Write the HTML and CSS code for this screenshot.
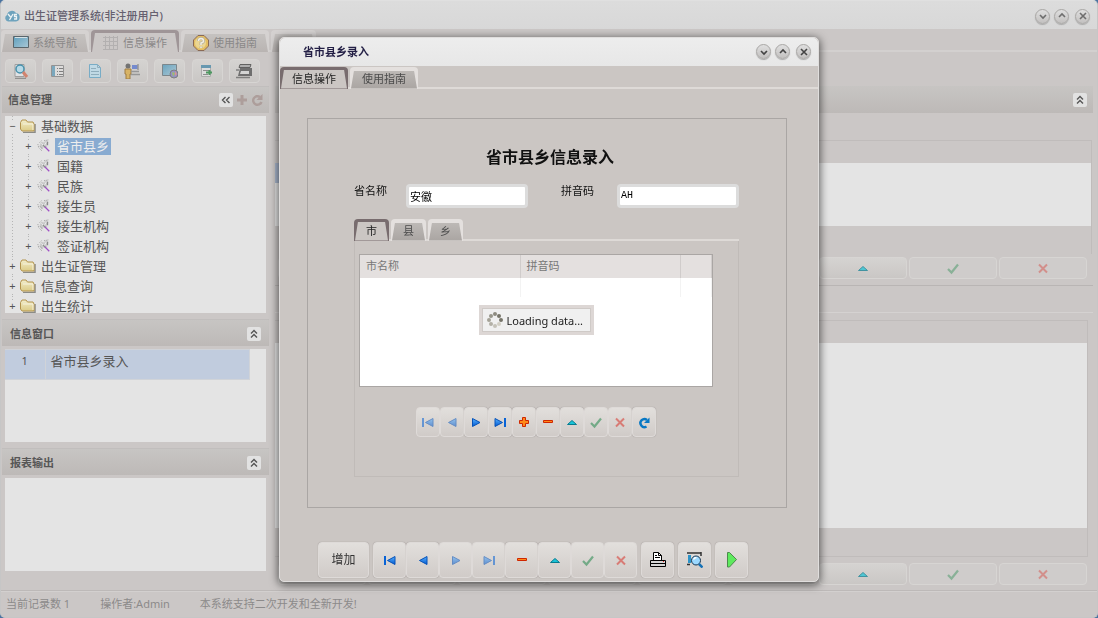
FILE: index.html
```html
<!DOCTYPE html>
<html lang="zh-CN">
<head>
  <meta charset="UTF-8">
  <title>出生证管理系统</title>
  <link rel="stylesheet" href="styles.css">
</head>
<body>
<svg class="defs" aria-hidden="true">
  <defs>
    <linearGradient id="blue" x1="0" y1="0" x2="0" y2="1"><stop offset="0" stop-color="#59b2ff"/><stop offset="1" stop-color="#0058d0"/></linearGradient>
    <linearGradient id="folderFill" x1="0" y1="0" x2="0" y2="1"><stop offset="0" stop-color="#f1eccb"/><stop offset="1" stop-color="#dccb86"/></linearGradient>
    <linearGradient id="screenFill" x1="0" y1="0" x2="1" y2="1"><stop offset="0" stop-color="#5f9fbd"/><stop offset="1" stop-color="#a9c8d6"/></linearGradient>
  </defs>
  <symbol id="first" viewBox="0 0 16 16"><path d="M3 4v9" stroke="#0863d6" stroke-width="2"/><path d="M13 4.500v8L5.500 8.500z" fill="url(#blue)" stroke="#0652b8"/></symbol>
  <symbol id="prev" viewBox="0 0 16 16"><path d="M12 4.500v8L4.500 8.500z" fill="url(#blue)" stroke="#0652b8"/></symbol>
  <symbol id="next" viewBox="0 0 16 16"><path d="M4.500 4.500v8L12 8.500z" fill="url(#blue)" stroke="#0652b8"/></symbol>
  <symbol id="last" viewBox="0 0 16 16"><path d="M13 4v9" stroke="#0863d6" stroke-width="2"/><path d="M3 4.500v8l7.500-4z" fill="url(#blue)" stroke="#0652b8"/></symbol>
  <symbol id="plus" viewBox="0 0 16 16"><path d="M6.500 3.500h3v3h3v3h-3v3h-3v-3h-3v-3h3z" fill="#ff8a18" stroke="#cf2600"/></symbol>
  <symbol id="minus" viewBox="0 0 16 16"><path d="M3.500 6.500h9v2h-9z" fill="#ff8a18" stroke="#cf2600"/></symbol>
  <symbol id="up" viewBox="0 0 16 16"><path d="M3.500 10.500h9L8 6.500z" fill="#18c4d8" stroke="#087c90"/></symbol>
  <symbol id="check" viewBox="0 0 16 16"><path d="M3 9l3.500 3.500L13 4.500" fill="none" stroke="#23894c" stroke-width="2.200"/></symbol>
  <symbol id="cross" viewBox="0 0 16 16"><path d="M4 4.500l8 8M12 4.500l-8 8" fill="none" stroke="#d8352c" stroke-width="2"/></symbol>
  <symbol id="reload" viewBox="0 0 16 16"><path d="M10.500 12.500A4 4 0 1 1 11 6" fill="none" stroke="#0878c4" stroke-width="2.400"/><path d="M13.500 3.500v5.500H8z" fill="#0878c4"/></symbol>
  <symbol id="collapse" viewBox="0 0 12 12"><path d="M3 5.500l3-3 3 3M3 9.500l3-3 3 3" fill="none" stroke="#555" stroke-width="1.400"/></symbol>
  <symbol id="chevDown" viewBox="0 0 16 16"><path d="M5 7l3 3 3-3" fill="none" stroke="#444" stroke-width="1.600"/></symbol>
  <symbol id="chevUp" viewBox="0 0 16 16"><path d="M5 9l3-3 3 3" fill="none" stroke="#444" stroke-width="1.600"/></symbol>
  <symbol id="close" viewBox="0 0 16 16"><path d="M5 5l6 6M11 5l-6 6" fill="none" stroke="#444" stroke-width="1.600"/></symbol>
  <symbol id="folder" viewBox="0 0 16 14"><path d="M3 13.500h12V5" fill="none" stroke="#8b8b86" stroke-width="1.500"/><path d="M.5 3.500L2 1h4l1.500 2H13l1 2v7H2L.5 10z" fill="url(#folderFill)" stroke="#b3944e"/><path d="M3 5h10v6" fill="none" stroke="#f6f2dc"/></symbol>
  <symbol id="gear" viewBox="0 0 16 16"><path d="M3 7l2-4 3 1 3-3 2 3-2 3 1 3-4-1-3 3z" fill="#c9c9c9"/><path d="M1 6l1 4 4 4M3 4l2-2M3 8l4 4M8 2l5-1" fill="none" stroke="#8f8f8f" stroke-dasharray="1 1"/><path d="M5 5l3 3 3-5" fill="none" stroke="#eee"/><path d="M7 7l3 3M12 3v4" stroke="#8a8a8a" stroke-width="1.500"/><path d="M9 9l5 5" stroke="#a04fc6" stroke-width="1.500"/></symbol>
</svg>

<div class="app">
  <header class="titlebar">
    <svg class="logo" viewBox="0 0 16 14"><path d="M4 12.500a3.500 3.500 0 0 1-1-6.500 5 5 0 0 1 9-2 4.300 4.300 0 0 1 0 8.500z" fill="#6ea3bd"/><path d="M4 5l2.500 3M9 5l-3.500 6M13 5.500h-2.500v2h2v2.500H10" fill="none" stroke="#eef3f5" stroke-width="1.300"/></svg>
    <h1>出生证管理系统(非注册用户)</h1>
    <div class="win-buttons">
      <button aria-label="最小化"><svg><use href="#chevDown"/></svg></button>
      <button aria-label="最大化"><svg><use href="#chevUp"/></svg></button>
      <button aria-label="关闭"><svg><use href="#close"/></svg></button>
    </div>
  </header>

  <nav class="tabs main-tabs">
    <button class="tab"><svg viewBox="0 0 16 16"><path d="M.5 1.500h15v11H.5z" fill="url(#screenFill)" stroke="#59656b"/><path d="M2 2.500h12" stroke="#d5e0e4"/></svg>系统导航</button>
    <button class="tab active"><svg viewBox="0 0 16 16"><path d="M0 2.500h15M0 6.500h15M0 10.500h15M0 14.500h15M2.500 1v14M6.500 1v14M10.500 1v14M14.500 1v14" stroke="#b3b0b0"/></svg>信息操作</button>
    <button class="tab"><svg viewBox="0 0 16 16"><path d="M5 .5h6L15.500 5v6L11 15.500H5L.5 11V5z" fill="#e2bd62" stroke="#8a6a56"/><circle cx="7.500" cy="8" r="5.500" fill="#ebd692"/><path d="M5.500 6q0-2.500 2.500-2.500T10.500 6Q10.500 7.500 8 8v2M8 11.500v1.500" fill="none" stroke="#b5b0a0" stroke-width="3"/><path d="M5.500 6q0-2.500 2.500-2.500T10.500 6Q10.500 7.500 8 8v2M8 11.500v1.500" fill="none" stroke="#f3efe0" stroke-width="1.500"/></svg>使用指南</button>
    <button class="tab spare" aria-label="更多"></button>
  </nav>

  <main class="workspace">
    <aside class="side">
      <div class="toolbar">
        <button aria-label="查询"><svg viewBox="0 0 16 16"><path d="M2 1.500h9v12H2z" fill="#e2e5e8" stroke="#9a9a9a"/><circle cx="7" cy="6" r="4" fill="#b5dbea" stroke="#398aa8" stroke-width="1.500"/><path d="M10 9l4 5" stroke="#d27c65" stroke-width="3"/><path d="M2 15.500h11" stroke="#8a8a8a" stroke-width="1.500"/></svg></button>
        <button aria-label="列表"><svg viewBox="0 0 16 16"><path d="M1.500 2.500h12v11h-12z" fill="#dfdedd" stroke="#8d8d8d"/><path d="M2 3h3v10H2z" fill="#72a4bc"/><path d="M7 5.500h1M9 5.500h4M7 8.500h1M9 8.500h4M7 11.500h1M9 11.500h4" stroke="#777"/></svg></button>
        <button aria-label="文档"><svg viewBox="0 0 16 16"><path d="M2.500 1.500h8l3 3v10h-11z" fill="#bfdbe8" stroke="#6fa9c6"/><path d="M10.500 1.500v3h3M4 5.500h5M4 8.500h8M4 11.500h8" fill="none" stroke="#89aabb"/></svg></button>
        <button aria-label="用户"><svg viewBox="0 0 16 16"><circle cx="4" cy="3" r="2.500" fill="#696969"/><path d="M1 6h6v5H6v5H2v-5H1z" fill="#d9b15b" stroke="#9a7436"/><path d="M8 2h6v4H8z" fill="#6b83cf"/><path d="M14 1v6M7 8.500h8M7 11.500h9" stroke="#929292" stroke-width="1.500"/></svg></button>
        <button aria-label="网络"><svg viewBox="0 0 16 16"><path d="M.5 1.500h14v11H.5z" fill="url(#screenFill)" stroke="#737f85"/><circle cx="12" cy="11" r="4" fill="#8d8bc6" stroke="#777"/><path d="M10 9l3 1-2 4z" fill="#99bd69"/><path d="M13 8l2 3-2 2z" fill="#d98c8c"/></svg></button>
        <button aria-label="新增"><svg viewBox="0 0 16 16"><path d="M2.500 2.500h9v11h-9z" fill="#dedede" stroke="#aaa"/><path d="M2 2h10v3H2z" fill="#5c93ad"/><path d="M4 7.500h7M4 11.500h5" stroke="#888"/><path d="M7 9.500h6M10.500 7v5" fill="none" stroke="#3e9254" stroke-width="2"/></svg></button>
        <button aria-label="打印"><svg viewBox="0 0 16 16"><path d="M4 1.500h11l-1 3H3z" fill="#aaa" stroke="#555"/><path d="M4 5h12v8H2z" fill="#656565"/><path d="M5 8h8v3H4z" fill="#d5d5d5"/><path d="M0 7h3M0 14.500h14" stroke="#777" stroke-width="1.500"/></svg></button>
      </div>

      <section class="panel grow">
        <header class="panel-head">
          <h2>信息管理</h2>
          <button class="fold" aria-label="折叠"><svg class="turn" viewBox="0 0 12 12"><use href="#collapse"/></svg></button>
          <button class="flat" aria-label="添加"><svg viewBox="0 0 12 12"><path d="M6 1v10M1 6h10" stroke="#ad9e9b" stroke-width="3"/></svg></button>
          <button class="flat" aria-label="刷新"><svg viewBox="0 0 12 12"><path d="M9 3A4.300 4.300 0 1 0 10.500 8" fill="none" stroke="#ad9e9b" stroke-width="2.400"/><path d="M11.500 0v6h-6z" fill="#ad9e9b"/></svg></button>
        </header>
        <div class="panel-body tree">
          <ul>
            <li class="open"><div class="row"><i>−</i><svg class="folder"><use href="#folder"/></svg><span>基础数据</span></div>
              <ul>
                <li><div class="row"><i>+</i><svg><use href="#gear"/></svg><span class="selected">省市县乡</span></div></li>
                <li><div class="row"><i>+</i><svg><use href="#gear"/></svg><span>国籍</span></div></li>
                <li><div class="row"><i>+</i><svg><use href="#gear"/></svg><span>民族</span></div></li>
                <li><div class="row"><i>+</i><svg><use href="#gear"/></svg><span>接生员</span></div></li>
                <li><div class="row"><i>+</i><svg><use href="#gear"/></svg><span>接生机构</span></div></li>
                <li><div class="row"><i>+</i><svg><use href="#gear"/></svg><span>签证机构</span></div></li>
              </ul>
            </li>
            <li><div class="row"><i>+</i><svg class="folder"><use href="#folder"/></svg><span>出生证管理</span></div></li>
            <li><div class="row"><i>+</i><svg class="folder"><use href="#folder"/></svg><span>信息查询</span></div></li>
            <li><div class="row"><i>+</i><svg class="folder"><use href="#folder"/></svg><span>出生统计</span></div></li>
          </ul>
        </div>
      </section>

      <section class="panel">
        <header class="panel-head">
          <h2>信息窗口</h2>
          <button class="fold" aria-label="折叠"><svg><use href="#collapse"/></svg></button>
        </header>
        <div class="panel-body">
          <table class="win-list">
            <tr><td>1</td><td>省市县乡录入</td></tr>
          </table>
        </div>
      </section>

      <section class="panel">
        <header class="panel-head">
          <h2>报表输出</h2>
          <button class="fold" aria-label="折叠"><svg><use href="#collapse"/></svg></button>
        </header>
        <div class="panel-body"></div>
      </section>
    </aside>

    <section class="content">
      <header class="panel-head">
        <button class="fold" aria-label="折叠"><svg><use href="#collapse"/></svg></button>
      </header>
      <div class="data-grid upper"><div class="grid-rows"><div class="current"></div></div></div>
      <div class="nav-bar">
        <button aria-label="首条"></button><button aria-label="上一条"></button><button aria-label="下一条"></button><button aria-label="末条"></button><button aria-label="插入"></button><button aria-label="删除"></button>
        <button aria-label="编辑"><svg><use href="#up"/></svg></button>
        <button class="off" aria-label="提交"><svg><use href="#check"/></svg></button>
        <button class="off" aria-label="取消"><svg><use href="#cross"/></svg></button>
      </div>
      <div class="divider"></div>
      <div class="data-grid lower"><div class="grid-rows"></div></div>
      <div class="nav-bar">
        <button aria-label="首条"></button><button aria-label="上一条"></button><button aria-label="下一条"></button><button aria-label="末条"></button><button aria-label="插入"></button><button aria-label="删除"></button>
        <button aria-label="编辑"><svg><use href="#up"/></svg></button>
        <button class="off" aria-label="提交"><svg><use href="#check"/></svg></button>
        <button class="off" aria-label="取消"><svg><use href="#cross"/></svg></button>
      </div>
    </section>
  </main>

  <footer class="status">
    <span>当前记录数 1</span>
    <span>操作者:Admin</span>
    <span>本系统支持二次开发和全新开发!</span>
  </footer>
</div>

<div class="overlay">
  <div class="dialog" role="dialog" aria-labelledby="dialogTitle">
    <header class="titlebar">
      <h1 id="dialogTitle">省市县乡录入</h1>
      <div class="win-buttons">
        <button aria-label="最小化"><svg><use href="#chevDown"/></svg></button>
        <button aria-label="最大化"><svg><use href="#chevUp"/></svg></button>
        <button aria-label="关闭"><svg><use href="#close"/></svg></button>
      </div>
    </header>
    <nav class="tabs">
      <button class="tab active">信息操作</button>
      <button class="tab">使用指南</button>
    </nav>

    <form class="form">
      <h2>省市县乡信息录入</h2>
      <div class="fields">
        <label for="province">省名称</label>
        <input id="province" type="text" value="安徽">
        <label for="pinyin">拼音码</label>
        <input id="pinyin" class="code" type="text" value="AH">
      </div>

      <nav class="tabs small-tabs">
        <button type="button" class="tab active">市</button>
        <button type="button" class="tab">县</button>
        <button type="button" class="tab">乡</button>
      </nav>
      <div class="tab-page">
        <div class="city-grid">
          <table>
            <thead><tr><th>市名称</th><th>拼音码</th><th></th></tr></thead>
            <tbody><tr><td></td><td></td><td></td></tr></tbody>
          </table>
          <div class="loading">
            <svg viewBox="0 0 16 16"><circle cx="8" cy="2" r="2" fill="#8d8b80"/><circle cx="12" cy="4" r="2" fill="#77756a"/><circle cx="14" cy="8" r="2" fill="#77756a"/><circle cx="12" cy="12" r="2" fill="#d2cfc5"/><circle cx="8" cy="14" r="2" fill="#c5c2b9"/><circle cx="4" cy="12" r="2" fill="#b3b0a6"/><circle cx="2" cy="8" r="2" fill="#a4a297"/><circle cx="4" cy="4" r="2" fill="#98968b"/></svg>
            <span>Loading data...</span>
          </div>
        </div>
        <div class="records">
          <button type="button" class="off" aria-label="首条"><svg><use href="#first"/></svg></button>
          <button type="button" class="off" aria-label="上一条"><svg><use href="#prev"/></svg></button>
          <button type="button" aria-label="下一条"><svg><use href="#next"/></svg></button>
          <button type="button" aria-label="末条"><svg><use href="#last"/></svg></button>
          <button type="button" aria-label="插入"><svg><use href="#plus"/></svg></button>
          <button type="button" aria-label="删除"><svg><use href="#minus"/></svg></button>
          <button type="button" aria-label="编辑"><svg><use href="#up"/></svg></button>
          <button type="button" class="off" aria-label="提交"><svg><use href="#check"/></svg></button>
          <button type="button" class="off" aria-label="取消"><svg><use href="#cross"/></svg></button>
          <button type="button" aria-label="刷新"><svg><use href="#reload"/></svg></button>
        </div>
      </div>
    </form>

    <div class="actions">
      <button class="add">增加</button>
      <div class="group">
        <button aria-label="首条"><svg><use href="#first"/></svg></button>
        <button aria-label="上一条"><svg><use href="#prev"/></svg></button>
        <button class="off" aria-label="下一条"><svg><use href="#next"/></svg></button>
        <button class="off" aria-label="末条"><svg><use href="#last"/></svg></button>
        <button aria-label="删除"><svg><use href="#minus"/></svg></button>
        <button aria-label="编辑"><svg><use href="#up"/></svg></button>
        <button class="off" aria-label="提交"><svg><use href="#check"/></svg></button>
        <button class="off" aria-label="取消"><svg><use href="#cross"/></svg></button>
      </div>
      <button aria-label="打印"><svg viewBox="0 0 16 16"><path d="M3.500 8V.5h5l3 3V8" fill="#fff" stroke="#000"/><path d="M8.500.5v3h3M5 3.500h2M5 5.500h5" fill="none" stroke="#000"/><path d="M.5 8.500h15v6H.5z" fill="#d6d6d6" stroke="#000"/><path d="M1 11.500h14" stroke="#000"/><path d="M13 9.500h1" stroke="#e02020"/></svg></button>
      <button aria-label="预览"><svg viewBox="0 0 16 16"><path d="M0 1h14M14 0v4M0 12.500h3" stroke="#333" stroke-width="1.500"/><path d="M1 3h3v8H1z" fill="#2c93c8"/><path d="M5 3h8v9H5z" fill="#ddd"/><circle cx="9" cy="8.500" r="4.500" fill="#9cd9ff" stroke="#17344e"/><path d="M6.500 7.500q1-2 3-2" fill="none" stroke="#fff" stroke-width="1.500"/><path d="M12 12l3.500 3.500" stroke="#1671b6" stroke-width="2.500"/></svg></button>
      <button aria-label="运行"><svg viewBox="0 0 16 16"><path d="M3.500.5h2l7 7-7 7.500h-2z" fill="#5eea5e" stroke="#4c8a4c"/></svg></button>
    </div>
  </div>
</div>
</body>
</html>
```
FILE: styles.css
```css
* {
  box-sizing: border-box;
}

body {
  margin: 0;
  background: #4a73a0;
  font-family: "Noto Sans", "Noto Sans CJK SC", sans-serif;
  font-size: 11px;
  line-height: 16px;
}

h1, h2 {
  margin: 0;
  font-size: 11px;
}

button {
  display: flex;
  align-items: center;
  justify-content: center;
  padding: 0;
  border: none;
  font: inherit;
  color: inherit;
}

svg {
  display: block;
  width: 16px;
  height: 16px;
  flex: none;
}

.defs {
  position: absolute;
  width: 0;
  height: 0;
}

.app {
  display: flex;
  flex-direction: column;
  min-height: 100vh;
  border: 1px solid #c6c6c6;
  border-top-color: #e0e0e0;
  border-radius: 5px;
  background: #cbc7c6;
  overflow: hidden;
}

/* title bars */
.titlebar {
  display: flex;
  align-items: center;
  height: 28px;
  padding: 2px 7px 0 3px;
  background: linear-gradient(#dcdcdc, #d8d8d8);
  color: #65606f;
}

.titlebar h1 {
  flex: 1;
  margin-left: 4px;
  font-weight: 500;
}

.logo {
  height: 14px;
}

.win-buttons {
  display: flex;
  gap: 4px;
}

.win-buttons button {
  width: 15px;
  height: 15px;
  border: 1px solid #a9a7a5;
  border-radius: 50%;
  background: linear-gradient(#dfdfdf, #c3c1c0);
  box-shadow: 0 1px 1px #aaa;
}

.win-buttons button:last-child {
  margin-left: 2px;
}

.app .win-buttons svg {
  opacity: 0.7;
}

/* tabs */
.tabs {
  display: flex;
  gap: 2px;
  height: 23px;
  padding: 1px 0 0;
  border-bottom: 2px solid #dedad7;
}

.tab {
  position: relative;
  width: 68px;
  height: 22px;
  padding-top: 3px;
  z-index: 0;
  border-radius: 4px 4px 0 0;
  background: #e4e0de;
  color: #4b4b4b;
}

.tab::before {
  content: "";
  position: absolute;
  z-index: -1;
  inset: 4px 0 0;
  background: linear-gradient(#bdb9b6, #aaa5a2);
  clip-path: polygon(4px 0, calc(100% - 4px) 0, calc(100% - 1px) 100%, 1px 100%);
}

.tab.active {
  background: #786c6e;
  color: #222;
}

.tab.active::before {
  inset: 3px 0 0;
  background: #cbc6c3;
}

.main-tabs {
  border-bottom-color: #d3d0cf;
}

.main-tabs .tab {
  gap: 4px;
  width: 88px;
  background: #d5d2d1;
  color: #8a8888;
}

.main-tabs .tab::before {
  background: linear-gradient(#c5c2c0, #b9b4b2);
}

.main-tabs .tab.active {
  background: #9f9597;
}

.main-tabs .tab.active::before {
  background: #cbc7c6;
}

.main-tabs .spare {
  width: 45px;
}

/* main area */
.workspace {
  flex: 1;
  display: grid;
  grid-template-columns: 267px 1fr;
  gap: 6px;
  padding: 0 4px 0 1px;
  border-bottom: 1px solid #bdb9b8;
}

.side, .content {
  display: flex;
  flex-direction: column;
  min-width: 0;
}

.side {
  padding-bottom: 19px;
}

.toolbar {
  display: flex;
  justify-content: space-between;
  height: 34px;
  padding: 7px 9px 3px 3px;
}

.toolbar button,
.nav-bar button {
  border: 1px solid #d7d5d3;
  border-radius: 4px;
  background: linear-gradient(#d5d3d1, #cac7c5);
}

.toolbar button {
  width: 31px;
}

.toolbar svg {
  opacity: 0.9;
}

.panel {
  display: flex;
  flex-direction: column;
  margin-bottom: 6px;
}

.panel:last-child {
  margin-bottom: 0;
}

.grow {
  flex: 1;
}

.panel-head {
  display: flex;
  align-items: center;
  justify-content: flex-end;
  gap: 3px;
  height: 27px;
  padding: 0 6px;
  background: linear-gradient(#c7c5c3, #bdb9b7);
  color: #565656;
}

.panel .panel-head {
  border-top: 1px solid #c1bebd;
}

.panel-head h2 {
  flex: 1;
  font-weight: 600;
}

.fold {
  width: 14px;
  height: 14px;
  border-radius: 2px;
  background: #e2e2e2;
}

.fold svg {
  width: 12px;
  height: 12px;
}

.panel:not(.grow) .panel-head {
  padding: 2px 8px 0;
}

.turn {
  transform: rotate(-90deg);
}

.flat {
  background: none;
}

.flat svg {
  width: 12px;
  height: 12px;
}

.panel-body {
  height: 93px;
  margin: 3px 3px 0;
  background: #e4e4e4;
}

.grow .panel-body {
  flex: 1 1 0;
  height: auto;
  min-height: 0;
  overflow: hidden;
}

/* tree */
.tree ul {
  margin: 0;
  padding: 0;
  list-style: none;
  color: #555;
  font-size: 13px;
}

.tree > ul {
  height: 0;
  padding-left: 3px;
}

.tree li {
  background: repeating-linear-gradient(#b5b5b5 0 1px, transparent 1px 3px) 4px 0 / 1px 100% no-repeat;
}

.tree li ul {
  padding-left: 16px;
}

.row {
  display: flex;
  align-items: center;
  height: 20px;
}

.row i {
  width: 9px;
  height: 11px;
  margin-right: 3px;
  background: #e4e4e4;
  font-size: 11px;
  line-height: 10px;
  font-style: normal;
  text-align: center;
}

.row svg {
  height: 14px;
}

.row span {
  padding: 0 2px;
  margin-left: 3px;
  line-height: 13px;
}

.row .selected {
  padding: 2px;
  background: #88abd1;
  color: #eee;
}

/* open windows */
.win-list {
  width: calc(100% - 16px);
  border-collapse: collapse;
  background: #c1ccde;
  color: #555;
}

.win-list td {
  height: 30px;
  padding: 3px 5px;
  border: 1px solid #d0d3d8;
  border-left: none;
  vertical-align: top;
  font-size: 13px;
}

.win-list td:first-child {
  width: 40px;
  text-align: center;
  font-size: 11px;
}

/* right side */
.content {
  padding-top: 34px;
}

.content .fold {
  margin-left: auto;
}

.data-grid {
  display: flex;
  flex-direction: column;
  border: 1px solid #c0bcbb;
  border-left: none;
}

.grid-rows {
  background: #e4e4e4;
}

.current {
  width: 20px;
  height: 20px;
  background: #a9b7cd;
}

.upper {
  height: 114px;
  margin: 27px 1px 3px 0;
  padding: 22px 0 28px;
  border-bottom: none;
}

.upper .grid-rows {
  flex: 1;
}

.nav-bar {
  display: flex;
  gap: 2px;
  padding: 0 6px 0 3px;
}

.nav-bar button {
  flex: 1;
  height: 22px;
}

.nav-bar .off {
  background: #cfcccb;
}

.nav-bar svg {
  opacity: 0.7;
}

.nav-bar .off svg {
  opacity: 0.4;
}

.divider {
  height: 28px;
  margin: 6px 0 7px;
  border-top: 1px solid #b9b5b4;
  border-bottom: 1px solid #d5d2d1;
}

.lower {
  flex: 1;
  margin: 0 5px 6px 0;
  padding: 22px 0 28px;
}

.lower .grid-rows {
  flex: 1;
}

.content .nav-bar:last-child {
  padding-bottom: 5px;
}

.status {
  display: flex;
  gap: 30px;
  height: 26px;
  padding: 4px 5px;
  border-top: 1px solid #d3d0cf;
  color: #8c8a8a;
}

/* dialog */
.overlay {
  position: fixed;
  inset: 0;
  display: grid;
  place-items: center;
}

.dialog {
  width: 540px;
  border: 1px solid #e0dedd;
  border-radius: 5px;
  background: #cbc6c3;
  box-shadow: 0 2px 8px 1px rgba(0, 0, 0, 0.6);
}

.dialog .titlebar {
  padding: 0 7px 0 19px;
  border-radius: 5px 5px 0 0;
  background: linear-gradient(#ededed, #e7e7e7);
  color: #231f45;
}

.dialog .titlebar h1 {
  font-weight: 700;
}

.form {
  margin: 29px 31px 0 27px;
  padding: 28px 47px 30px 46px;
  border: 1px solid #aaa6a4;
  color: #111;
}

.form h2 {
  margin-right: -7px;
  font-size: 16px;
  font-weight: 700;
  line-height: 20px;
  text-align: center;
}

.fields {
  display: grid;
  grid-template-columns: 52px 1fr 89px 1fr;
  margin: 17px 0 10px;
}

.fields label:nth-of-type(2) {
  padding-left: 33px;
}

.fields label {
  line-height: 14px;
}

.fields input {
  width: 100%;
  min-width: 0;
  height: 24px;
  padding: 0 1px;
  border: 3px solid #dcdcdc;
  border-radius: 4px;
  background: #fff;
  font-family: "Liberation Mono", "Noto Sans CJK SC", monospace;
  font-size: 11px;
}

.fields .code {
  font-size: 10px;
}

.small-tabs .tab {
  width: 35px;
}

.tab-page {
  padding: 13px 25px 39px 4px;
  border: 1px solid #c0bbb8;
  border-top: none;
}

.city-grid {
  display: grid;
  height: 133px;
  border: 1px solid #aaa6a4;
  background: #fff;
}

.city-grid > * {
  grid-area: 1 / 1;
}

.city-grid table {
  width: 100%;
  height: 42px;
  table-layout: fixed;
  border-collapse: collapse;
}

.city-grid th {
  height: 23px;
  padding: 0 6px;
  border-right: 1px solid #d0cccb;
  background: #e4e0df;
  color: #777;
  font-weight: 400;
  text-align: left;
}

.city-grid th:nth-child(-n+2) {
  width: 160px;
}

.city-grid td {
  height: 19px;
  padding: 0;
  border-right: 1px solid #f3f3f3;
}

.loading {
  display: flex;
  gap: 4px;
  width: 115px;
  height: 30px;
  place-self: center;
  padding: 4px 5px;
  border: 3px solid #ddd7d5;
  outline: 1px solid #cfcac7;
  outline-offset: -4px;
  background: #f0f0f0;
  color: #222;
  white-space: nowrap;
}

.loading span {
  padding-top: 1px;
}

.records {
  display: flex;
  justify-content: center;
  margin-top: 20px;
}

.records button,
.actions button {
  border: 1px solid #dedad8;
  border-radius: 4px;
  background: linear-gradient(#e2dfdc, #d0cbc8);
  box-shadow: 0 0 1px #8f8a88;
}

.records button {
  width: 24px;
  height: 30px;
}

.dialog .off {
  box-shadow: none;
}

.dialog .off svg {
  opacity: 0.55;
}

.actions {
  display: flex;
  gap: 4px;
  padding: 34px 38px 3px;
}

.actions button {
  width: 33px;
  height: 36px;
}

.actions .add {
  width: 51px;
  font-size: 12px;
  color: #333;
}

.group {
  display: flex;
}
```
